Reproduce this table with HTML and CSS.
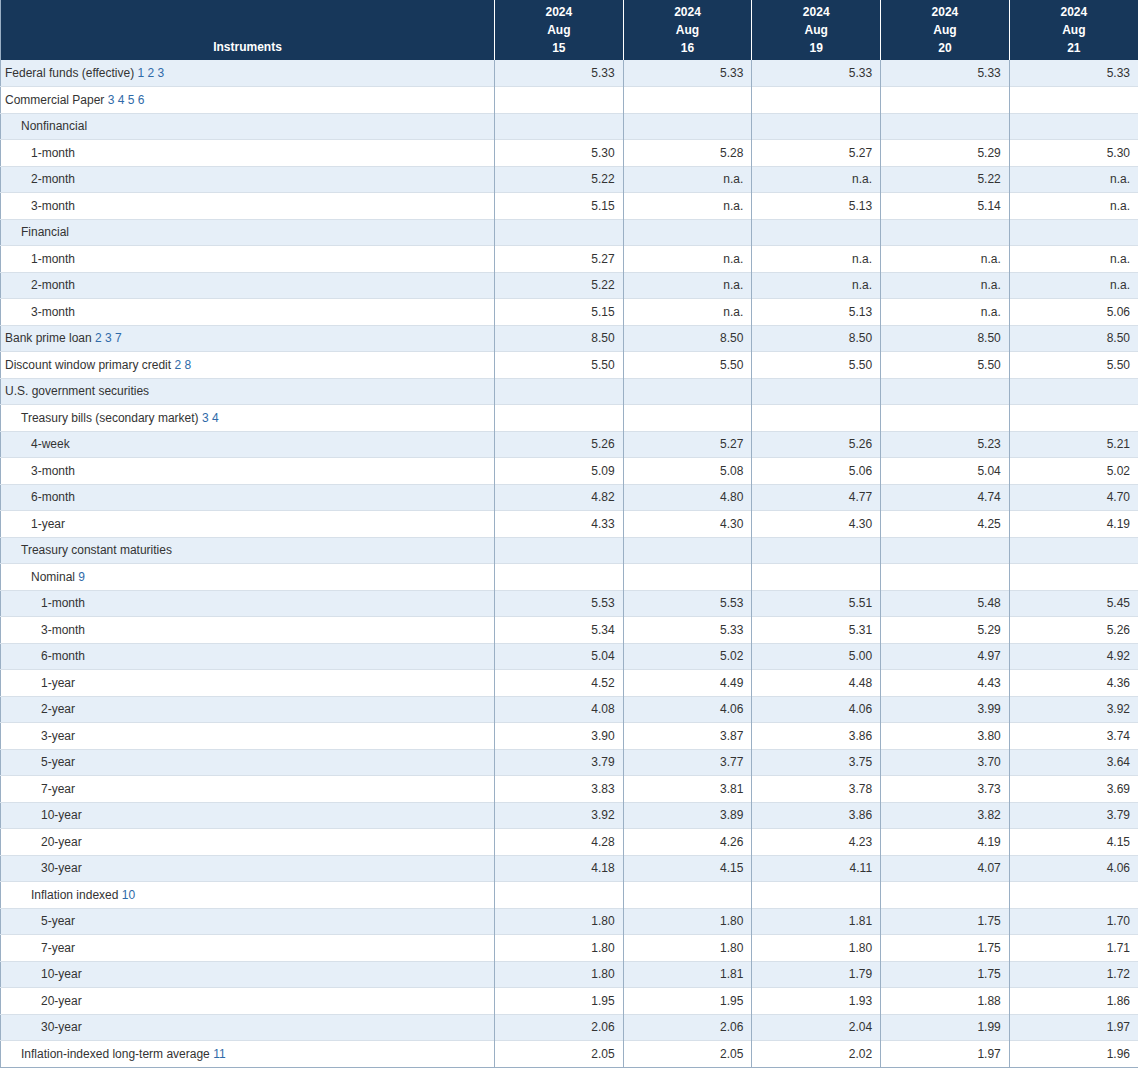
FILE: index.html
```html
<!DOCTYPE html>
<html>
<head>
<meta charset="utf-8">
<link rel="stylesheet" href="styles.css">
</head>
<body>
<table class="rates">
<colgroup><col class="c-inst"><col><col><col><col><col></colgroup>
<thead>
<tr>
<th class="h-inst">Instruments</th>
<th>2024<br>Aug<br>15</th>
<th>2024<br>Aug<br>16</th>
<th>2024<br>Aug<br>19</th>
<th>2024<br>Aug<br>20</th>
<th>2024<br>Aug<br>21</th>
</tr>
</thead>
<tbody>
<tr><td class="l0">Federal funds (effective) <a>1</a> <a>2</a> <a>3</a></td><td>5.33</td><td>5.33</td><td>5.33</td><td>5.33</td><td>5.33</td></tr>
<tr><td class="l0">Commercial Paper <a>3</a> <a>4</a> <a>5</a> <a>6</a></td><td></td><td></td><td></td><td></td><td></td></tr>
<tr><td class="l1">Nonfinancial</td><td></td><td></td><td></td><td></td><td></td></tr>
<tr><td class="l2">1-month</td><td>5.30</td><td>5.28</td><td>5.27</td><td>5.29</td><td>5.30</td></tr>
<tr><td class="l2">2-month</td><td>5.22</td><td>n.a.</td><td>n.a.</td><td>5.22</td><td>n.a.</td></tr>
<tr><td class="l2">3-month</td><td>5.15</td><td>n.a.</td><td>5.13</td><td>5.14</td><td>n.a.</td></tr>
<tr><td class="l1">Financial</td><td></td><td></td><td></td><td></td><td></td></tr>
<tr><td class="l2">1-month</td><td>5.27</td><td>n.a.</td><td>n.a.</td><td>n.a.</td><td>n.a.</td></tr>
<tr><td class="l2">2-month</td><td>5.22</td><td>n.a.</td><td>n.a.</td><td>n.a.</td><td>n.a.</td></tr>
<tr><td class="l2">3-month</td><td>5.15</td><td>n.a.</td><td>5.13</td><td>n.a.</td><td>5.06</td></tr>
<tr><td class="l0">Bank prime loan <a>2</a> <a>3</a> <a>7</a></td><td>8.50</td><td>8.50</td><td>8.50</td><td>8.50</td><td>8.50</td></tr>
<tr><td class="l0">Discount window primary credit <a>2</a> <a>8</a></td><td>5.50</td><td>5.50</td><td>5.50</td><td>5.50</td><td>5.50</td></tr>
<tr><td class="l0">U.S. government securities</td><td></td><td></td><td></td><td></td><td></td></tr>
<tr><td class="l1">Treasury bills (secondary market) <a>3</a> <a>4</a></td><td></td><td></td><td></td><td></td><td></td></tr>
<tr><td class="l2">4-week</td><td>5.26</td><td>5.27</td><td>5.26</td><td>5.23</td><td>5.21</td></tr>
<tr><td class="l2">3-month</td><td>5.09</td><td>5.08</td><td>5.06</td><td>5.04</td><td>5.02</td></tr>
<tr><td class="l2">6-month</td><td>4.82</td><td>4.80</td><td>4.77</td><td>4.74</td><td>4.70</td></tr>
<tr><td class="l2">1-year</td><td>4.33</td><td>4.30</td><td>4.30</td><td>4.25</td><td>4.19</td></tr>
<tr><td class="l1">Treasury constant maturities</td><td></td><td></td><td></td><td></td><td></td></tr>
<tr><td class="l2">Nominal <a>9</a></td><td></td><td></td><td></td><td></td><td></td></tr>
<tr><td class="l3">1-month</td><td>5.53</td><td>5.53</td><td>5.51</td><td>5.48</td><td>5.45</td></tr>
<tr><td class="l3">3-month</td><td>5.34</td><td>5.33</td><td>5.31</td><td>5.29</td><td>5.26</td></tr>
<tr><td class="l3">6-month</td><td>5.04</td><td>5.02</td><td>5.00</td><td>4.97</td><td>4.92</td></tr>
<tr><td class="l3">1-year</td><td>4.52</td><td>4.49</td><td>4.48</td><td>4.43</td><td>4.36</td></tr>
<tr><td class="l3">2-year</td><td>4.08</td><td>4.06</td><td>4.06</td><td>3.99</td><td>3.92</td></tr>
<tr><td class="l3">3-year</td><td>3.90</td><td>3.87</td><td>3.86</td><td>3.80</td><td>3.74</td></tr>
<tr><td class="l3">5-year</td><td>3.79</td><td>3.77</td><td>3.75</td><td>3.70</td><td>3.64</td></tr>
<tr><td class="l3">7-year</td><td>3.83</td><td>3.81</td><td>3.78</td><td>3.73</td><td>3.69</td></tr>
<tr><td class="l3">10-year</td><td>3.92</td><td>3.89</td><td>3.86</td><td>3.82</td><td>3.79</td></tr>
<tr><td class="l3">20-year</td><td>4.28</td><td>4.26</td><td>4.23</td><td>4.19</td><td>4.15</td></tr>
<tr><td class="l3">30-year</td><td>4.18</td><td>4.15</td><td>4.11</td><td>4.07</td><td>4.06</td></tr>
<tr><td class="l2">Inflation indexed <a>10</a></td><td></td><td></td><td></td><td></td><td></td></tr>
<tr><td class="l3">5-year</td><td>1.80</td><td>1.80</td><td>1.81</td><td>1.75</td><td>1.70</td></tr>
<tr><td class="l3">7-year</td><td>1.80</td><td>1.80</td><td>1.80</td><td>1.75</td><td>1.71</td></tr>
<tr><td class="l3">10-year</td><td>1.80</td><td>1.81</td><td>1.79</td><td>1.75</td><td>1.72</td></tr>
<tr><td class="l3">20-year</td><td>1.95</td><td>1.95</td><td>1.93</td><td>1.88</td><td>1.86</td></tr>
<tr><td class="l3">30-year</td><td>2.06</td><td>2.06</td><td>2.04</td><td>1.99</td><td>1.97</td></tr>
<tr><td class="l1">Inflation-indexed long-term average <a>11</a></td><td>2.05</td><td>2.05</td><td>2.02</td><td>1.97</td><td>1.96</td></tr>
</tbody>
</table>
</body>
</html>
```

FILE: styles.css
```css
html, body {
  margin: 0;
  padding: 0;
  background: #ffffff;
}
body {
  font-family: "Liberation Sans", Arial, sans-serif;
  font-size: 12px;
  color: #333333;
}
.rates {
  width: 1138px;
  border-collapse: collapse;
  table-layout: fixed;
  border-left: 1px solid #9aafc4;
  border-bottom: 1px solid #9aafc4;
}
.c-inst {
  width: 494px;
}
.rates th {
  background: #17375a;
  color: #ffffff;
  font-weight: bold;
  font-size: 12px;
  line-height: 18px;
  height: 60px;
  padding: 3px 4px 3px;
  text-align: center;
  vertical-align: top;
  border-left: 1px solid #ffffff;
  box-sizing: border-box;
}
.rates th.h-inst {
  vertical-align: bottom;
  border-left: none;
  padding-bottom: 4px;
}
.rates td {
  height: 26.5px;
  padding: 0 8px 0 4px;
  box-sizing: border-box;
  text-align: right;
  vertical-align: middle;
  border-top: 1px solid #d7e0e9;
  border-left: 1px solid #9aafc4;
  line-height: 14px;
  white-space: nowrap;
}
.rates tbody tr:nth-child(odd) td {
  background: #e6eff8;
}
.rates tbody tr:first-child td {
  border-top: none;
}
.rates td.l0, .rates td.l1, .rates td.l2, .rates td.l3 {
  text-align: left;
  border-left: none;
}
.rates td.l1 { padding-left: 20px; }
.rates td.l2 { padding-left: 30px; }
.rates td.l3 { padding-left: 40px; }
.rates a {
  color: #2f6aa8;
  text-decoration: none;
}
```
